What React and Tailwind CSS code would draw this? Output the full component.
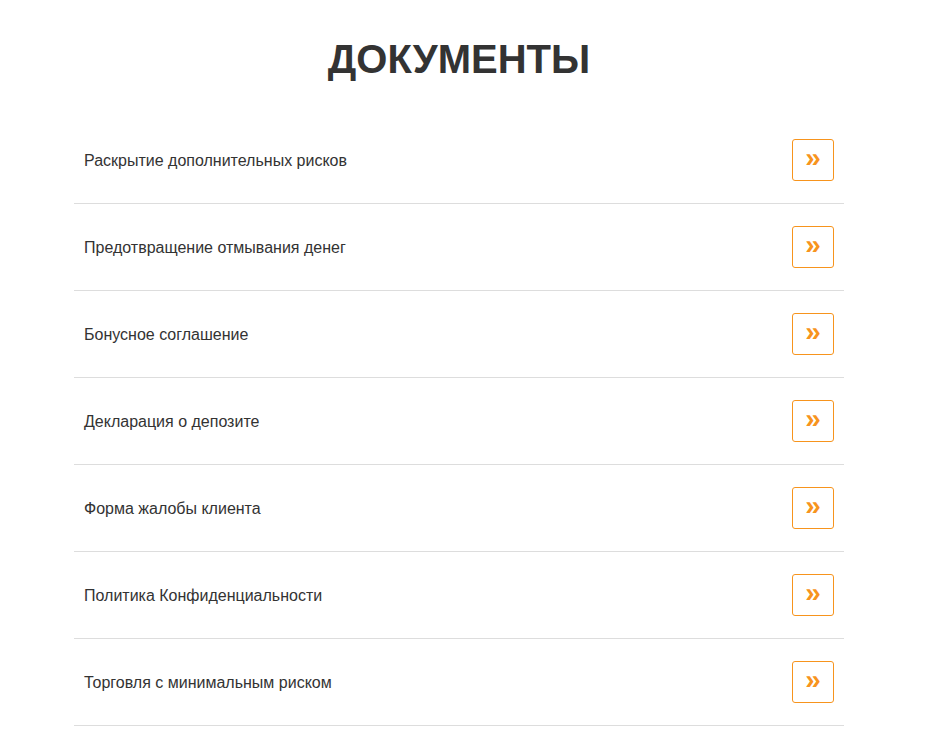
const docs = [
  "Раскрытие дополнительных рисков",
  "Предотвращение отмывания денег",
  "Бонусное соглашение",
  "Декларация о депозите",
  "Форма жалобы клиента",
  "Политика Конфиденциальности",
  "Торговля с минимальным риском",
];

export default function App() {
  return (
    <div className="min-h-[737px] bg-white font-['Liberation_Sans',Arial,sans-serif] text-[#333]">
      <div className="w-[918px]">
        <h1 className="pt-[36px] text-center text-[40px] font-bold leading-[46px] text-[#333]">
          ДОКУМЕНТЫ
        </h1>
        <ul className="mx-auto mt-[35px] w-[770px]">
          {docs.map((doc) => (
            <li
              key={doc}
              className="flex items-center justify-between border-b border-[#dddddd] py-[22px] pl-[10px] pr-[10px]"
            >
              <span className="pt-[2px] text-[16px] leading-6 text-[#333]">{doc}</span>
              <a
                href="#"
                className="flex h-[42px] w-[42px] items-center justify-center rounded-[3px] border border-[#f7941d] pb-[4px] text-[28px] font-bold leading-none text-[#f7941d]"
              >
                »
              </a>
            </li>
          ))}
        </ul>
      </div>
    </div>
  );
}
